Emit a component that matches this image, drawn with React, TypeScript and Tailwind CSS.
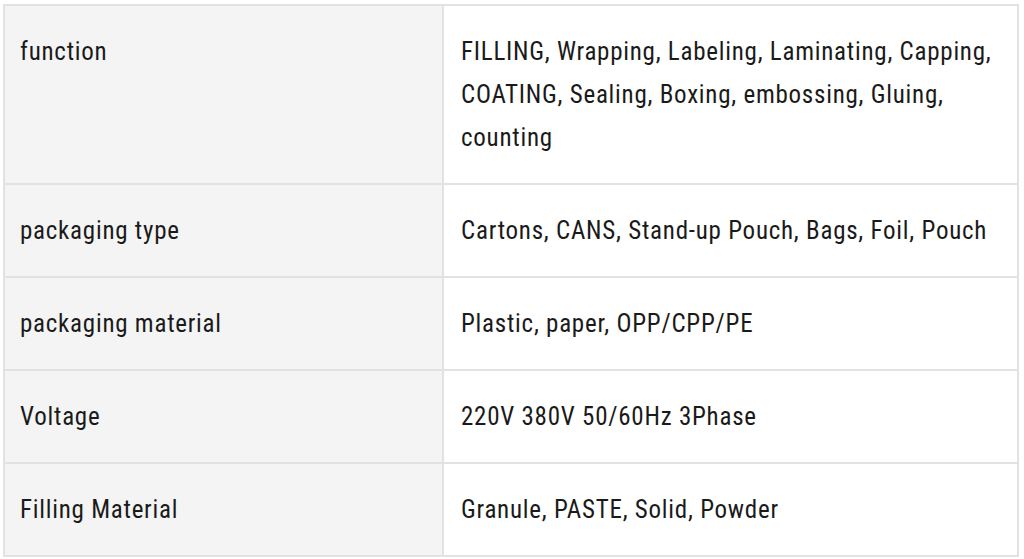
const rows: [string, string][] = [
  ["function", "FILLING, Wrapping, Labeling, Laminating, Capping, COATING, Sealing, Boxing, embossing, Gluing, counting"],
  ["packaging type", "Cartons, CANS, Stand-up Pouch, Bags, Foil, Pouch"],
  ["packaging material", "Plastic, paper, OPP/CPP/PE"],
  ["Voltage", "220V 380V 50/60Hz 3Phase"],
  ["Filling Material", "Granule, PASTE, Solid, Powder"],
]

export default function App() {
  return (
    <div className="h-[559px] w-[1024px] bg-white pl-[3px] pt-[4px]" style={{ fontFamily: "Roboto, 'Liberation Sans', sans-serif" }}>
      <table className="w-[1016px] border-collapse border-2 border-[#e2e2e2] text-[25px] leading-[43px] tracking-[0.75px] text-[#1a1a1a] [font-stretch:85%]">
        <tbody>
          {rows.map(([k, v]) => (
            <tr key={k}>
              <td className="w-[439px] border-2 border-[#e2e2e2] bg-[#f4f4f4] pl-[15px] pr-[17px] py-[24px] align-top">{k}</td>
              <td className="border-2 border-[#e2e2e2] bg-white pl-[17px] pr-[14px] py-[24px] align-top">{v}</td>
            </tr>
          ))}
        </tbody>
      </table>
    </div>
  )
}
